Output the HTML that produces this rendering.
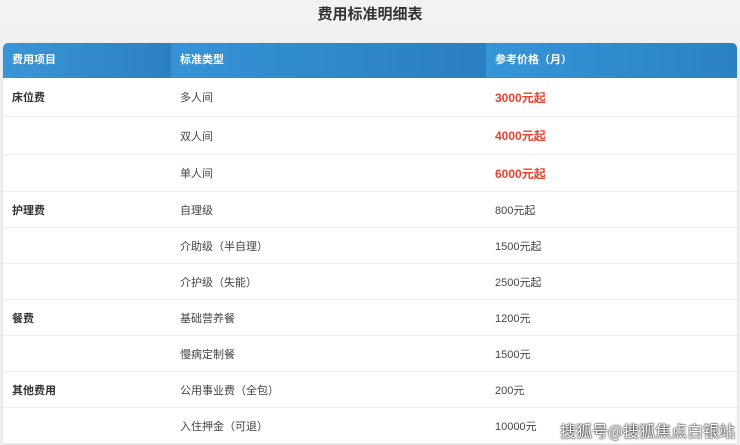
<!DOCTYPE html>
<html><head><meta charset="utf-8"><style>
*{margin:0;padding:0;box-sizing:border-box}
html,body{width:740px;height:445px;overflow:hidden}
body{background:linear-gradient(#f1f2f4,#eef0f2 80px,#eef0f2);font-family:"Liberation Sans","Noto Sans CJK SC",sans-serif;position:relative}
h1{position:absolute;top:3px;left:0;width:740px;text-align:center;font-size:15px;color:#333;font-weight:bold}
.t{position:absolute;left:3px;top:43px;width:734px;background:#fff;border-radius:5px 5px 0 0;overflow:hidden;box-shadow:0 1px 3px rgba(0,0,0,.1)}
.r{display:flex;border-bottom:1px solid #eee;align-items:center;font-size:11px;color:#444}
.r div{padding-left:9px}
.c1{width:168px}.c2{width:315px}.c3{flex:1}
.h{height:35px;color:#fff;font-weight:bold;border:0}
.h .c1{background:linear-gradient(90deg,#3a95d8,#2b80c0);height:35px;line-height:35px}
.h .c2{background:linear-gradient(90deg,#3593d6,#2a7fbf);height:35px;line-height:35px}
.h .c3{background:linear-gradient(90deg,#3595d8,#2b82c2);height:35px;line-height:35px}
.b{font-weight:bold;color:#333}
.red{color:#e8412f;font-weight:bold;font-size:12px}
.wm{position:absolute;left:560px;top:420px;font-size:16px;line-height:20px;white-space:nowrap;color:#fff;text-shadow:0 0 2px #000,0 0 1px #000;font-family:"Noto Sans CJK SC",sans-serif}
</style></head><body>
<h1>费用标准明细表</h1>
<div class="t">
<div class="r h"><div class="c1">费用项目</div><div class="c2">标准类型</div><div class="c3">参考价格（月）</div></div>
<div class="r" style="height:39px"><div class="c1 b">床位费</div><div class="c2">多人间</div><div class="c3 red">3000元起</div></div>
<div class="r" style="height:38px"><div class="c1"></div><div class="c2">双人间</div><div class="c3 red">4000元起</div></div>
<div class="r" style="height:37px"><div class="c1"></div><div class="c2">单人间</div><div class="c3 red">6000元起</div></div>
<div class="r" style="height:36px"><div class="c1 b">护理费</div><div class="c2">自理级</div><div class="c3">800元起</div></div>
<div class="r" style="height:36px"><div class="c1"></div><div class="c2">介助级（半自理）</div><div class="c3">1500元起</div></div>
<div class="r" style="height:36px"><div class="c1"></div><div class="c2">介护级（失能）</div><div class="c3">2500元起</div></div>
<div class="r" style="height:36px"><div class="c1 b">餐费</div><div class="c2">基础营养餐</div><div class="c3">1200元</div></div>
<div class="r" style="height:36px"><div class="c1"></div><div class="c2">慢病定制餐</div><div class="c3">1500元</div></div>
<div class="r" style="height:36px"><div class="c1 b">其他费用</div><div class="c2">公用事业费（全包）</div><div class="c3">200元</div></div>
<div class="r" style="height:36px"><div class="c1"></div><div class="c2">入住押金（可退）</div><div class="c3">10000元</div></div>
</div>
<div class="wm">搜狐号@搜狐焦点白银站</div>
</body></html>
